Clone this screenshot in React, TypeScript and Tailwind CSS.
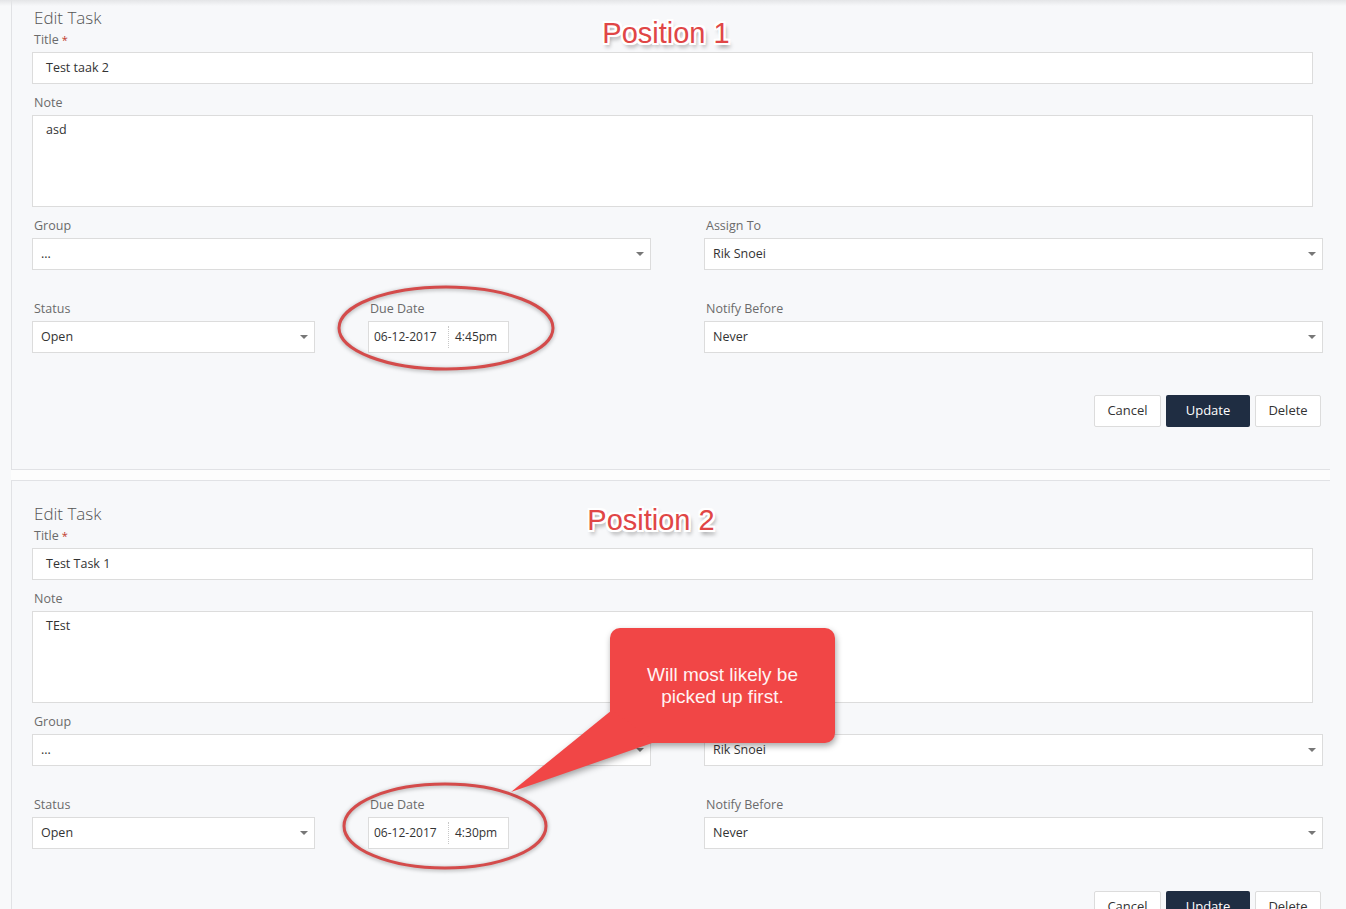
import React from "react";

type Task = {
  title: string;
  note: string;
  group: string;
  assignee: string;
  status: string;
  date: string;
  time: string;
  notify: string;
};

const tasks: Task[] = [
  { title: "Test taak 2", note: "asd", group: "...", assignee: "Rik Snoei", status: "Open", date: "06-12-2017", time: "4:45pm", notify: "Never" },
  { title: "Test Task 1", note: "TEst", group: "...", assignee: "Rik Snoei", status: "Open", date: "06-12-2017", time: "4:30pm", notify: "Never" },
];

function Label({ children, required }: { children: React.ReactNode; required?: boolean }) {
  return (
    <div className="px-[2px] text-[12.5px] leading-[18px] text-[#6b6b6b]">
      {children}
      {required && <span className="text-[#c0392b] ml-[3px] text-[11px] align-top">*</span>}
    </div>
  );
}

function Select({ value }: { value: string }) {
  return (
    <div className="mt-[3px] h-[32px] bg-white border border-[#dcdcdc] flex items-center justify-between pl-[8px] pr-[6px] text-[12.5px] text-[#333]">
      <span>{value}</span>
      <span className="w-0 h-0 border-x-[4px] border-t-[4px] border-x-transparent border-t-[#777]" />
    </div>
  );
}

function TaskPanel({ task, first }: { task: Task; first?: boolean }) {
  return (
    <div
      className={`ml-[11px] w-[1319px] bg-[#f7f8fa] border-l border-[#e1e2e5] pl-[20px] pb-[42px] ${
        first ? "-mt-[16px] border-b pt-[23px]" : "border-t pt-[22px]"
      }`}
    >
      <div className="w-[1291px]">
        <div className="px-[2px] text-[17px] leading-[22px] text-[#555] font-light">Edit Task</div>
        <div className="mt-[2px]">
          <Label required>Title</Label>
          <div className="mt-[3px] w-[1281px] h-[32px] bg-white border border-[#dcdcdc] flex items-center px-[13px] text-[12.5px] text-[#333]">
            {task.title}
          </div>
        </div>
        <div className="mt-[10px]">
          <Label>Note</Label>
          <div className="mt-[3px] w-[1281px] h-[92px] bg-white border border-[#dcdcdc] px-[13px] pt-[5px] text-[12.5px] leading-[18px] text-[#333]">
            {task.note}
          </div>
        </div>

        <div className="mt-[10px] grid grid-cols-2 gap-x-[53px]">
          <div>
            <Label>Group</Label>
            <Select value={task.group} />
          </div>
          <div>
            <Label>Assign To</Label>
            <Select value={task.assignee} />
          </div>
        </div>

        <div className="mt-[30px] grid grid-cols-2 gap-x-[53px]">
          <div className="grid grid-cols-2 gap-x-[53px]">
            <div>
              <Label>Status</Label>
              <Select value={task.status} />
            </div>
            <div>
              <Label>Due Date</Label>
              <div className="mt-[3px] w-[141px] h-[32px] bg-white border border-[#dcdcdc] flex text-[12px] text-[#333]">
                <div className="w-[79px] flex items-center pl-[5px]">{task.date}</div>
                <div className="flex-1 flex items-center pl-[6px] border-l border-dotted border-[#c8c8c8] my-[4px]">
                  {task.time}
                </div>
              </div>
            </div>
          </div>
          <div>
            <Label>Notify Before</Label>
            <Select value={task.notify} />
          </div>
        </div>

        <div className="mt-[42px] flex justify-end gap-[5px] pr-[2px] text-[13px]">
          <button className="h-[32px] w-[67px] bg-white border border-[#dcdcdc] rounded-[2px] text-[#333]">Cancel</button>
          <button className="h-[32px] w-[84px] bg-[#1f2d42] rounded-[2px] text-white">Update</button>
          <button className="h-[32px] w-[66px] bg-white border border-[#dcdcdc] rounded-[2px] text-[#333]">Delete</button>
        </div>
      </div>
    </div>
  );
}

function Ring({ cx, cy, rx, ry }: { cx: number; cy: number; rx: number; ry: number }) {
  const pad = 8;
  return (
    <svg
      className="absolute pointer-events-none [filter:drop-shadow(0_1px_2px_rgba(0,0,0,0.35))]"
      style={{ left: cx - rx - pad, top: cy - ry - pad }}
      width={(rx + pad) * 2}
      height={(ry + pad) * 2}
    >
      <ellipse cx={rx + pad} cy={ry + pad} rx={rx} ry={ry} fill="none" stroke="#d44b4b" strokeWidth={3} />
    </svg>
  );
}

function Heading({ children, className }: { children: React.ReactNode; className: string }) {
  return (
    <div
      className={`absolute -translate-x-1/2 whitespace-nowrap text-[29px] leading-[32px] text-[#e04646] [font-family:'Liberation_Sans',Arial,sans-serif] [text-shadow:-2px_-2px_0_#fff,2px_-2px_0_#fff,-2px_2px_0_#fff,2px_2px_0_#fff,0_-2px_0_#fff,0_2px_0_#fff,-2px_0_0_#fff,2px_0_0_#fff,2px_4px_4px_rgba(0,0,0,0.45)] ${className}`}
    >
      {children}
    </div>
  );
}

export default function App() {
  return (
    <div className="relative h-[909px] w-full overflow-hidden bg-[#f8f9fa] [font-family:'Open_Sans',sans-serif]">
      <TaskPanel task={tasks[0]} first />
      <div className="ml-[11px] w-[1319px] h-[10px] bg-[#fdfdfd]" />
      <TaskPanel task={tasks[1]} />

      {/* header shadow */}
      <div className="absolute top-0 left-0 w-full h-[6px] bg-gradient-to-b from-[#e4e5e7] to-transparent" />

      <Heading className="left-[666px] top-[17px]">Position 1</Heading>
      <Heading className="left-[651px] top-[504px]">Position 2</Heading>

      <Ring cx={446} cy={328} rx={107} ry={41} />
      <Ring cx={445} cy={826} rx={101} ry={42} />

      {/* callout */}
      <svg
        className="absolute left-0 top-0 pointer-events-none [filter:drop-shadow(1px_3px_3px_rgba(0,0,0,0.35))]"
        width={1346}
        height={909}
      >
        <rect x={610} y={628} width={225} height={115} rx={10} fill="#f14646" />
        <polygon points="612,710 655,742 511,792" fill="#f14646" />
      </svg>
      <div className="absolute left-[610px] top-[628px] w-[225px] h-[115px] flex items-center justify-center text-center text-[19px] leading-[22px] text-[#fff3f3] [font-family:'Liberation_Sans',Arial,sans-serif]">
        Will most likely be
        <br />
        picked up first.
      </div>
    </div>
  );
}
